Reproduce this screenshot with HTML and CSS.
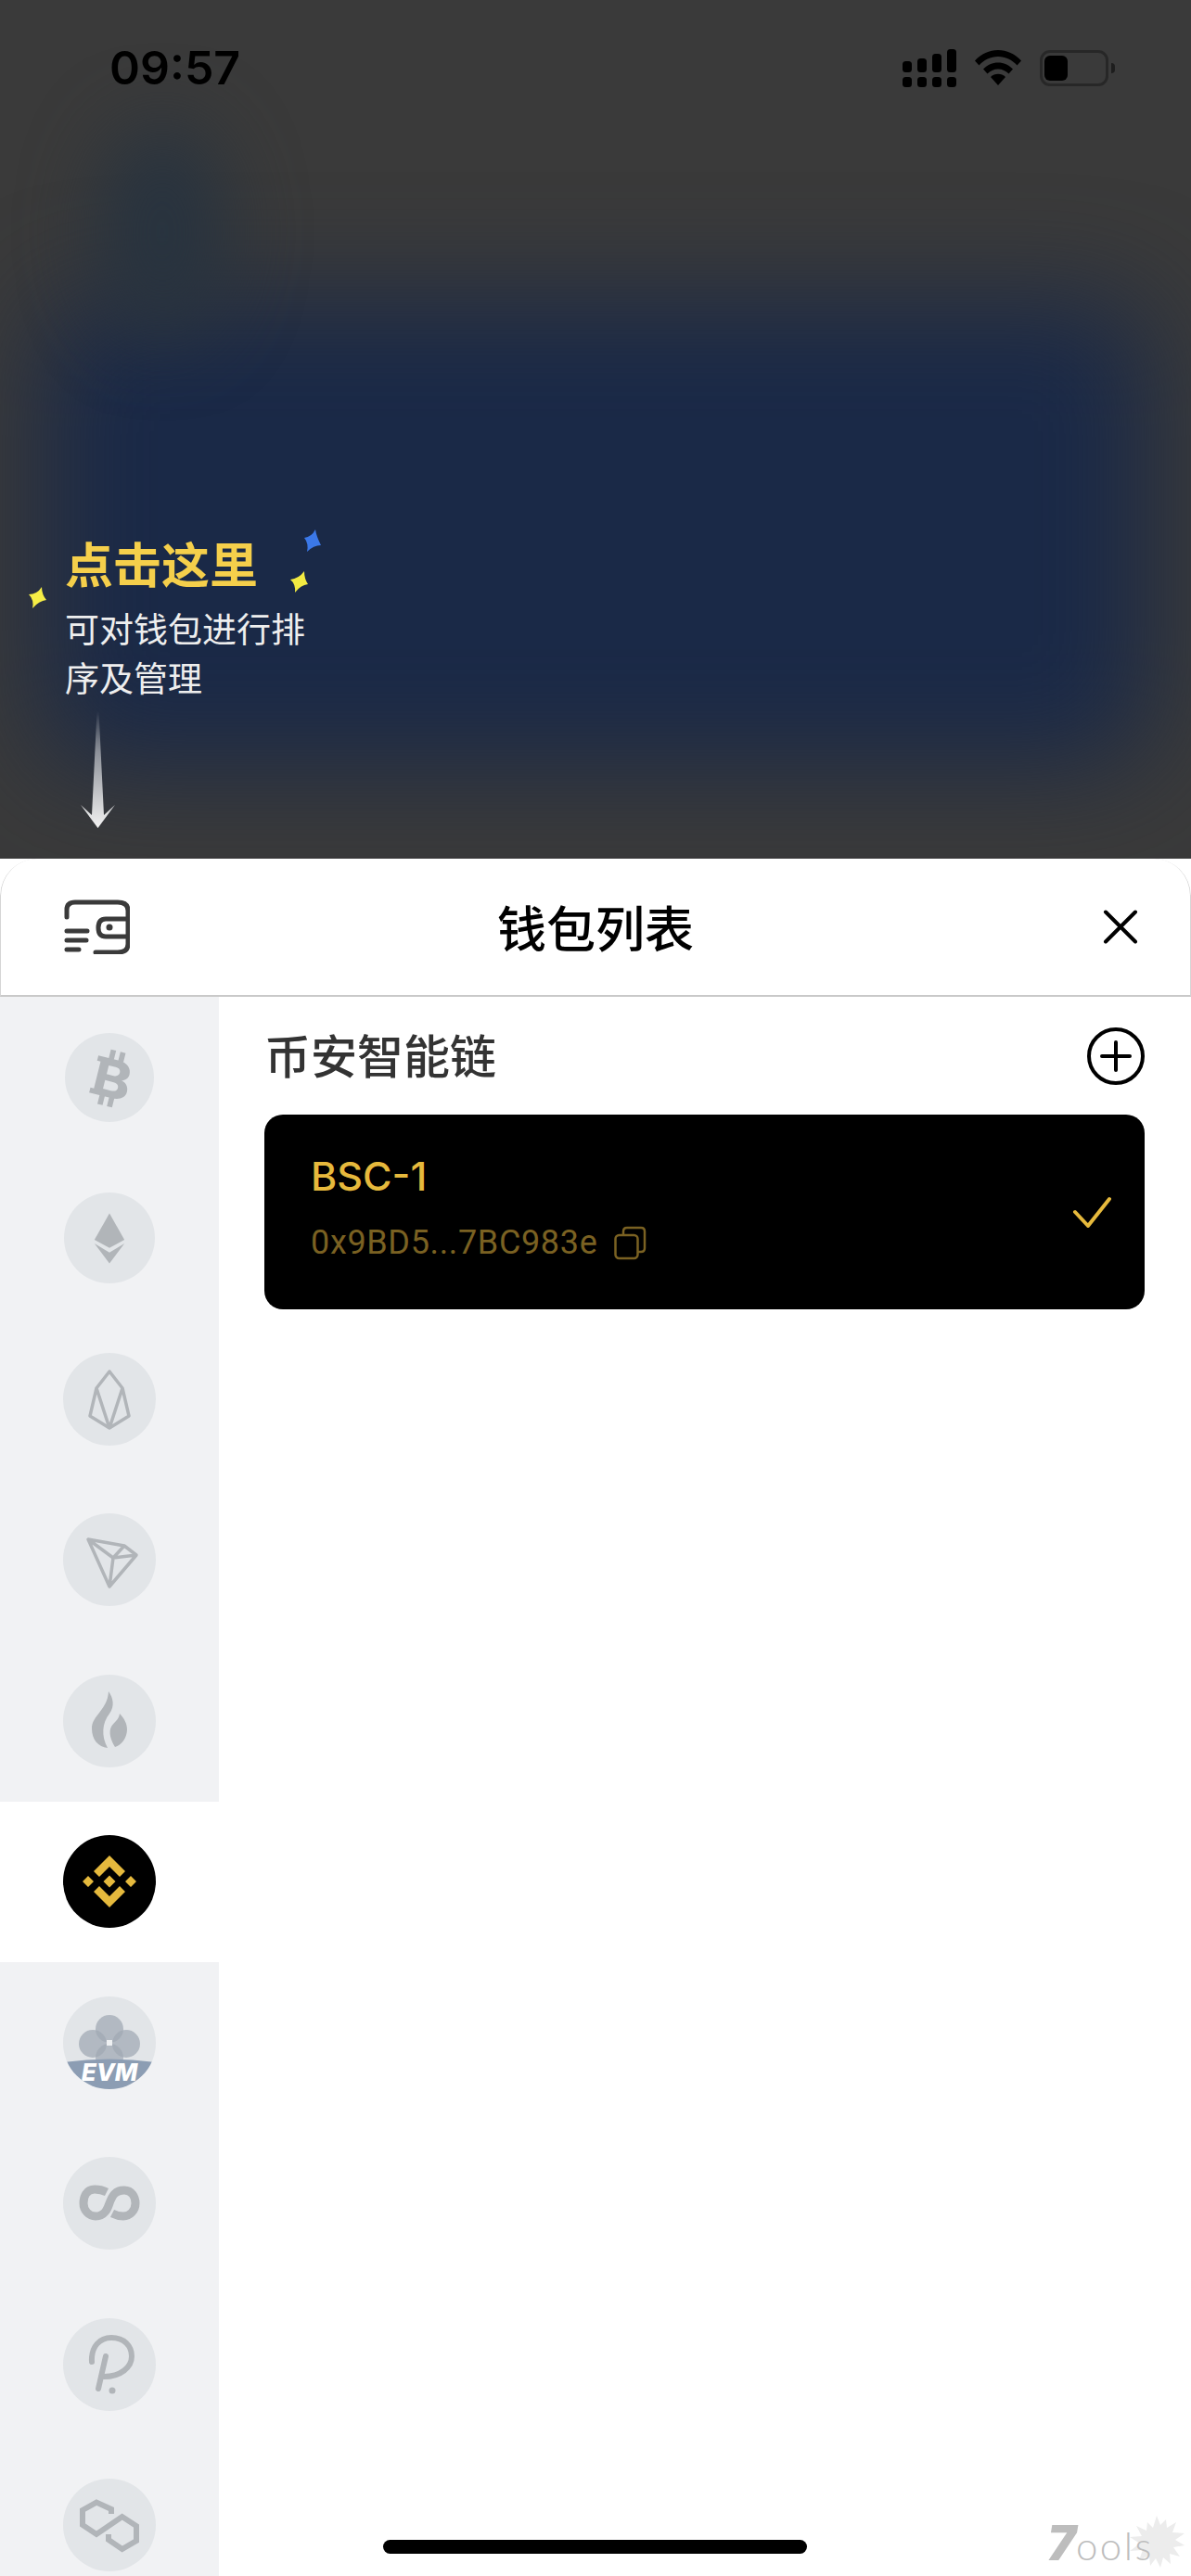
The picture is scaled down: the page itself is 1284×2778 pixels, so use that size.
FILE: index.html
```html
<!DOCTYPE html>
<html lang="zh-CN">
<head>
<meta charset="utf-8">
<title>钱包列表</title>
<link rel="stylesheet" href="styles.css">
</head>
<body>
<div class="phone">
  <section class="top">
    <div class="backdrop"><div class="blob-main"></div><div class="blob-small"></div></div>
    <header class="statusbar">
      <span class="time">09:57</span>
      <div class="status-icons">
        <svg class="signal" width="58" height="41" viewBox="0 0 58 41" fill="#000">
          <rect x="0" y="13" width="10" height="12" rx="3.5"/><rect x="16" y="10" width="10" height="15" rx="3.5"/><rect x="32" y="5" width="10" height="20" rx="3.5"/><rect x="48" y="0" width="10" height="25" rx="3.5"/>
          <rect x="0" y="30" width="10" height="11" rx="3.5"/><rect x="16" y="30" width="10" height="11" rx="3.5"/><rect x="32" y="30" width="10" height="11" rx="3.5"/><rect x="48" y="30" width="10" height="11" rx="3.5"/>
        </svg>
        <svg class="wifi" width="50" height="38" viewBox="0 0 50 38" fill="#000">
          <path d="M0 11.500C7 4 15.500 0 25 0s18 4 25 11.500l-4.500 5C40 10.500 33 7 25 7S10 10.500 4.500 16.500z"/>
          <path d="M9 20.500C13.500 16 19 13.500 25 13.500s11.500 2.500 16 7l-4.500 5C33.500 22.500 29.500 20.500 25 20.500s-8.500 2-11.500 5z"/>
          <path d="M17 29c2.200-2 5-3.200 8-3.200s5.800 1.200 8 3.200l-8 9z"/>
        </svg>
        <div class="battery"><span class="battery-level"></span></div>
        <span class="battery-nub"></span>
      </div>
    </header>
    <div class="tip">
      <svg class="star star-blue" width="18" height="24" viewBox="0 0 18 24"><path d="M12 0Q13 7 18 17Q10 17 3 24Q5 15 0 9Q8 8 12 0Z" fill="#3b78e8"/></svg>
      <svg class="star star-yellow-a" width="19" height="23" viewBox="0 0 19 23"><path d="M15 0Q15 8 19 14Q11 15 5 23Q6 14 0 9Q9 8 15 0Z" fill="#f2ea42"/></svg>
      <svg class="star star-yellow-b" width="19" height="23" viewBox="0 0 19 23"><path d="M14 0Q14 8 19 14Q11 15 4 23Q6 14 0 8Q9 8 14 0Z" fill="#f6ee46"/></svg>
      <h2 class="tip-title">点击这里</h2>
      <p class="tip-text">可对钱包进行排序及管理</p>
      <svg class="tip-arrow" width="42" height="127" viewBox="0 0 42 127">
        <defs><linearGradient id="arrowFade" x1="0" y1="0" x2="0" y2="1"><stop offset="0" stop-color="#fff" stop-opacity="0"/><stop offset=".35" stop-color="#dfe1e5" stop-opacity=".55"/><stop offset="1" stop-color="#f2f2f2"/></linearGradient></defs>
        <path d="M19.500 0h2L27 112l12-11-18.500 25L2 101l12 11z" fill="url(#arrowFade)"/>
      </svg>
    </div>
  </section>

  <section class="sheet">
    <header class="sheet-head">
      <svg class="wallet-icon" width="72" height="60" viewBox="0 0 72 60" fill="none" stroke="#3a3a3a" stroke-width="5" stroke-linecap="round">
        <path d="M4 20v-8q0-8 9-8h46q11 0 11 9v36q0 9-11 9H35"/>
        <path d="M68 22H46q-8 0-8 9.500T46 41h22"/>
        <circle cx="50" cy="31" r="3.500" fill="#3a3a3a" stroke="none"/>
        <path d="M4 35h22M4 45h21M4 55h13"/>
      </svg>
      <h1 class="sheet-title">钱包列表</h1>
      <svg class="close-icon" width="40" height="39" viewBox="0 0 40 39" fill="none" stroke="#000" stroke-width="4" stroke-linecap="round"><path d="M4 3.500l32 32M36 3.500l-32 32"/></svg>
    </header>
    <div class="sheet-body">
      <nav class="chains">
        <div class="chain"><span class="coin coin-s"><svg viewBox="0 0 100 100" fill="#b1b5b9"><g transform="rotate(14 50 50)"><path fill-rule="evenodd" d="M32 29H56C66 29 71 35 71 41C71 46 68 49 64 50C69 51 73 55 73 61C73 68 67 72 57 72H32V66H36V35H32ZM46 37V47H54C58 47 60 45 60 42C60 39 58 37 54 37ZM46 54V64H55C60 64 62 62 62 59C62 56 60 54 55 54Z"/><path d="M44 19h6v11h-6zM55 19h6v11h-6zM44 71h6v11h-6zM55 71h6v11h-6z"/></g></svg></span></div>
        <div class="chain"><span class="coin coin-m"><svg viewBox="0 0 100 100" fill="#b1b5b9"><path d="M50 23l16.500 29L50 61l-16.500-9z"/><path d="M33.500 56L50 66l16.500-10L50 78z"/></svg></span></div>
        <div class="chain"><span class="coin"><svg viewBox="0 0 100 100" fill="none" stroke="#b1b5b9" stroke-width="3.500" stroke-linejoin="round"><path d="M50 20l14 18 7 30-21 13-21-13 7-30zM36 38l14 43 14-43"/></svg></span></div>
        <div class="chain"><span class="coin"><svg viewBox="0 0 100 100" fill="none" stroke="#b1b5b9" stroke-width="3.500" stroke-linejoin="round"><path d="M27 28l39 7 13 10-29 34zM27 28l27 20-4 31M54 48l25-3M66 35L54 48"/></svg></span></div>
        <div class="chain"><span class="coin"><svg viewBox="0 0 100 100" fill="#b1b5b9"><path d="M49 18C54 25 56 34 50 42C42 52 41 66 48 79C38 78 31 70 31 58C31 44 48 38 49 18Z"/><path d="M61 42C66 47 69 53 69 59C69 68 63 76 56 78C51 70 49 62 52 56C55 51 60 49 61 42Z"/></svg></span></div>
        <div class="chain chain-active"><span class="coin coin-bsc"><svg viewBox="0 0 100 100" fill="#e5b93d"><path d="M50 22l17 17-6 6-11-11-11 11-6-6zM50 78l17-17-6-6-11 11-11-11-6 6zM50 43.500l6.500 6.500-6.500 6.500-6.500-6.500zM27 44l6 6-6 6-6-6zM73 44l6 6-6 6-6-6z"/></svg></span></div>
        <div class="chain"><span class="coin"><svg viewBox="0 0 100 100"><g fill="#a0a8b3" fill-opacity=".72"><circle cx="50" cy="35" r="15"/><circle cx="32" cy="51" r="15"/><circle cx="68" cy="51" r="15"/><circle cx="50" cy="66" r="15"/></g><rect x="47" y="47" width="6" height="6" fill="#eef0f2"/><path d="M0 71Q50 64 100 71V100H0z" fill="#8c9db3"/><text class="evm-label" x="50" y="91" text-anchor="middle">EVM</text></svg></span></div>
        <div class="chain"><span class="coin"><svg viewBox="0 0 100 100" fill="none" stroke="#b1b5b9" stroke-width="9"><path d="M47 38C42 35.500 38 35 34 35C25 35 22 43 22 50C22 58 28 64 35 64C45 64 48 56 50 50C53 42 56 36 66 36C74 36 78 43 78 50C78 58 72 64 65 64C61 64 57 63 53 61"/></svg></span></div>
        <div class="chain"><span class="coin"><svg viewBox="0 0 100 100" fill="none" stroke="#b1b5b9" stroke-width="6" stroke-linecap="round"><path d="M31 47C30 30 40 21 52 21C66 21 74 30 74 41C74 53 62 63 44 63"/><path d="M46 41L38 76"/><circle cx="53" cy="78" r="3.500" fill="#b1b5b9" stroke="none"/></svg></span></div>
        <div class="chain"><span class="coin"><svg viewBox="0 0 100 100" fill="none" stroke="#b1b5b9" stroke-width="6"><path d="M52 38V33L36 25.600 21 34V50L36 60 63.700 41 79 51V67L63.700 76 49 66V60"/></svg></span></div>
      </nav>
      <main class="wallets">
        <div class="group-head">
          <h3 class="group-title">币安智能链</h3>
          <svg class="add-icon" width="62" height="62" viewBox="0 0 62 62" fill="none" stroke="#000" stroke-width="4" stroke-linecap="round"><circle cx="31" cy="31" r="29"/><path d="M16 31h30M31 16v30"/></svg>
        </div>
        <article class="wallet-card">
          <div class="wallet-info">
            <div class="wallet-name">BSC-1</div>
            <div class="wallet-addr"><span>0x9BD5...7BC983e</span>
              <svg class="copy-icon" width="35" height="37" viewBox="0 0 35 37" fill="none" stroke="#7a6122" stroke-width="2.500"><rect x="1.500" y="10" width="24" height="25" rx="4"/><path d="M10 10V6q0-4 4-4h15q4 0 4 4v18q0 4-4 4h-3"/></svg>
            </div>
          </div>
          <svg class="check-icon" width="42" height="34" viewBox="0 0 42 34" fill="none" stroke="#e6b93c" stroke-width="4" stroke-linecap="round" stroke-linejoin="round"><path d="M3 17l14 15L40 3"/></svg>
        </article>
      </main>
    </div>
  </section>

  <div class="home-bar"></div>
  <div class="watermark">
    <svg class="splat" width="62" height="62" viewBox="0 0 62 62" fill="#ececec"><path d="M31 1l4 10 6-6 1 9 10-6-4 11 13 1-10 7 10 6-12 2 7 10-11-3 1 11-8-7-3 11-5-10-6 8-1-11-11 5 4-11-14 1 11-8-11-7 13-1-6-11 11 5 1-9 6 6z"/></svg>
    <span class="mark-seven">7</span><span class="mark-rest">ools</span>
  </div>
</div>
</body>
</html>
```

FILE: styles.css
```css
* { box-sizing: border-box; }
html, body { margin: 0; padding: 0; }
body { background: #fff; font-family: "Inter", "Noto Sans CJK SC", sans-serif; }
h1, h2, h3, p { margin: 0; }
svg { display: block; flex: none; }

.phone {
  position: relative;
  width: 1284px;
  height: 2778px;
  overflow: hidden;
  display: flex;
  flex-direction: column;
}

/* dimmed app behind the sheet */
.top {
  position: relative;
  height: 926px;
  flex: none;
  overflow: hidden;
  background: #3a3a3a;
}
.backdrop { position: absolute; inset: 0; }
.blob-main {
  position: absolute;
  left: 45px;
  top: 325px;
  width: 1195px;
  height: 500px;
  border-radius: 60px;
  background: #1a2947;
  filter: blur(58px);
}
.blob-small {
  position: absolute;
  left: 105px;
  top: 135px;
  width: 140px;
  height: 230px;
  border-radius: 50%;
  background: #28333f;
  filter: blur(40px);
}

.statusbar {
  position: relative;
  height: 146px;
  padding: 0 82px 0 118px;
  display: flex;
  align-items: center;
  justify-content: space-between;
}
.time {
  font: 600 50px/1 "Inter", sans-serif;
  color: #000;
}
.status-icons { display: flex; align-items: center; }
.wifi { margin-left: 20px; }
.battery {
  margin-left: 20px;
  width: 74px;
  height: 39px;
  padding: 3px 2px;
  border: 3px solid #272727;
  border-radius: 11px;
}
.battery-level {
  display: block;
  width: 25px;
  height: 27px;
  background: #000;
  border-radius: 6px;
}
.battery-nub {
  margin-left: 3px;
  width: 4px;
  height: 11px;
  background: #1d1d1d;
  border-radius: 0 5px 5px 0;
}

.tip {
  position: relative;
  margin-top: 431px;
  padding-left: 70px;
  font-family: "Noto Sans CJK SC", sans-serif;
}
.tip-title {
  font-size: 52px;
  line-height: 60px;
  font-weight: 700;
  color: #f5cf4b;
}
.tip-text {
  margin-top: 14px;
  width: 262px;
  font-size: 37px;
  line-height: 53px;
  color: #eeeeee;
}
.tip-arrow { margin: 10px 0 0 15px; }
.star { position: absolute; }
.star-blue { left: 328px; top: -6px; }
.star-yellow-a { left: 313px; top: 39px; }
.star-yellow-b { left: 31px; top: 56px; }

/* sheet */
.sheet {
  flex: 1;
  min-height: 0;
  display: flex;
  flex-direction: column;
  background: #fff;
  border-radius: 40px 40px 0 0;
  overflow: hidden;
}
.sheet-head {
  height: 149px;
  flex: none;
  padding: 0 55px;
  display: grid;
  grid-template-columns: 1fr auto 1fr;
  align-items: center;
  border: 1px solid #d5d5d5;
  border-top: 0;
  border-bottom: 2px solid #c9c9c9;
  border-radius: 40px 40px 0 0;
  font-family: "Noto Sans CJK SC", sans-serif;
}
.wallet-icon { margin: -2px 0 0 12px; }
.close-icon { justify-self: end; }
.sheet-title {
  font-size: 53px;
  font-weight: 500;
  line-height: 1;
  color: #000;
}
.sheet-body { flex: 1; min-height: 0; display: flex; }

.chains {
  width: 236px;
  flex: none;
  background: #f1f2f4;
  overflow: hidden;
}
.chain {
  height: 173.5px;
  display: flex;
  align-items: center;
  justify-content: center;
}
.chain-active { background: #fff; }
.coin {
  width: 100px;
  height: 100px;
  border-radius: 50%;
  background: #e2e5e8;
  overflow: hidden;
  flex: none;
}
.coin svg { width: 100%; height: 100%; }
.coin-s { width: 96px; height: 96px; }
.coin-m { width: 98px; height: 98px; }
.coin-bsc { background: #000; }
.evm-label {
  font: italic 800 26px "Inter", sans-serif;
  fill: #fff;
}

.wallets { flex: 1; padding: 0 50px 0 49px; }
.group-head {
  height: 127px;
  display: flex;
  align-items: center;
  justify-content: space-between;
}
.group-title {
  padding-bottom: 6px;
  font: 500 50px/1 "Noto Sans CJK SC", sans-serif;
  color: #333;
}
.wallet-card {
  height: 210px;
  padding: 0 36px 0 50px;
  display: flex;
  align-items: center;
  justify-content: space-between;
  background: #000;
  border-radius: 20px;
}
.wallet-info { display: flex; flex-direction: column; padding-bottom: 11px; }
.wallet-name {
  font: 500 43px/50px "Inter", sans-serif;
  color: #e6b93c;
}
.wallet-addr {
  margin-top: 27px;
  display: flex;
  align-items: center;
  gap: 18px;
  font: 400 36px/40px "Roboto", sans-serif;
  letter-spacing: 0.65px;
  color: #7a6122;
}

.home-bar {
  position: absolute;
  left: 413px;
  top: 2739px;
  width: 457px;
  height: 15px;
  border-radius: 8px;
  background: #000;
}
.watermark {
  position: absolute;
  left: 1129px;
  top: 2715px;
  width: 150px;
  height: 56px;
  display: flex;
  align-items: flex-end;
  color: #bdbdbd;
}
.splat { position: absolute; left: 87px; top: -3px; }
.mark-seven {
  position: relative;
  font: italic 900 52px/56px "Inter", sans-serif;
}
.mark-rest {
  position: relative;
  font: 300 42px/52px "Lato", sans-serif;
  letter-spacing: 2.5px;
}
```
